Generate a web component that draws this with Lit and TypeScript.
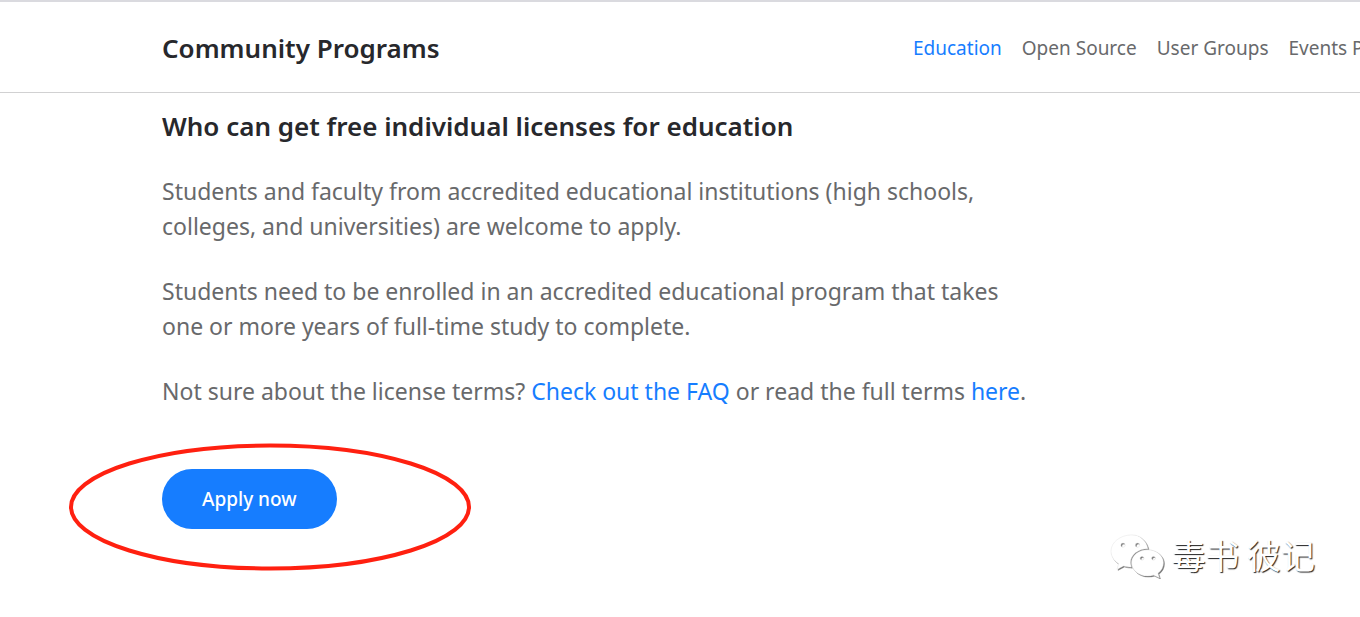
import { LitElement, html, css, svg } from "lit";
import { customElement } from "lit/decorators.js";
import { classMap } from "lit/directives/class-map.js";

const programs = ["Education", "Open Source", "User Groups", "Events Partnership"];

@customElement("app-root")
export class AppRoot extends LitElement {
  static styles = css`
    :host {
      display: block;
      position: relative;
      min-height: 100vh;
      overflow: hidden;
      background: #fff;
      color: #27282c;
      font-family: "Noto Sans", "Open Sans", "Noto Sans CJK SC", sans-serif;
    }
    a {
      color: #167dff;
      text-decoration: none;
    }
    .header {
      display: grid;
      grid-template-columns: minmax(300px, 751px) minmax(0, 1fr);
      align-items: center;
      padding: 28px 0 26px 162px;
      border-top: 2px solid #dadadf;
      border-bottom: 1px solid #d1d1d2;
    }
    .title,
    .heading {
      margin: 0;
      font-size: 26px;
      line-height: 36px;
      font-weight: 600;
    }
    .nav {
      display: flex;
      gap: 20px;
      min-width: 0;
      font-size: 19px;
      line-height: 28px;
      white-space: nowrap;
    }
    .nav a {
      color: #68696b;
    }
    .nav a.current {
      color: #167dff;
    }
    .content {
      padding: 15px 40px 0 162px;
    }
    .text {
      max-width: 880px;
      margin: 30px 0;
      font-size: 23px;
      line-height: 35px;
      color: #68696b;
    }
    .action {
      position: relative;
      display: inline-block;
      margin-top: 30px;
    }
    .apply {
      display: block;
      height: 60px;
      padding: 0 40px;
      border: 0;
      border-radius: 30px;
      background: #167dff;
      color: #fff;
      font: 500 19px/28px "Noto Sans", "Open Sans", sans-serif;
      cursor: pointer;
    }
    .ring {
      position: absolute;
      left: -93px;
      top: -26px;
      width: 402px;
      height: 128px;
      pointer-events: none;
    }
    .mark {
      position: absolute;
      right: 45px;
      bottom: 38px;
      display: flex;
      align-items: center;
      gap: 7px;
      color: #fff;
      font: 400 34px/48px "Noto Sans CJK SC", sans-serif;
      text-shadow: 1px 1px 1px #222;
    }
    .wechat {
      width: 54px;
      height: 46px;
      filter: drop-shadow(1px 1px 0 #777);
    }
  `;

  render() {
    return html`
      <header class="header">
        <h1 class="title">Community Programs</h1>
        <nav class="nav" aria-label="Programs">
          ${programs.map(
            (name, i) => html`<a href="#" class=${classMap({ current: i === 0 })}>${name}</a>`
          )}
        </nav>
      </header>
      <main class="content">
        <h2 class="heading">Who can get free individual licenses for education</h2>
        <p class="text">
          Students and faculty from accredited educational institutions (high schools, colleges,
          and universities) are welcome to apply.
        </p>
        <p class="text">
          Students need to be enrolled in an accredited educational program that takes one or more
          years of full-time study to complete.
        </p>
        <p class="text">
          Not sure about the license terms? <a href="#">Check out the FAQ</a> or read the full
          terms <a href="#">here</a>.
        </p>
        <div class="action">
          <button class="apply" type="button">Apply now</button>
          <svg class="ring" viewBox="0 0 402 128" aria-hidden="true">
            <ellipse cx="201" cy="64" rx="199" ry="61.5" fill="none" stroke="#ff2010" stroke-width="4" />
          </svg>
        </div>
      </main>
      <div class="mark">
        <svg class="wechat" viewBox="0 0 54 48" preserveAspectRatio="none" aria-hidden="true">
          ${svg`
            <path fill="#fff" stroke="#ddd" stroke-width=".4" fill-rule="evenodd" d="M22 3C10.500 3 1 10.500 1 20c0 5.500 3 10 7.500 13L7 39l6.500-3.500c2.500.800 5 1.200 8 1.200A17 17 0 0 1 20.500 32C20.500 24 28 17.500 38 17.500C36.500 9 30 3 22 3ZM13 11.500a2.200 2.200 0 1 1 0 4.400a2.200 2.200 0 0 1 0-4.400ZM27.500 11.500a2.200 2.200 0 1 1 0 4.400a2.200 2.200 0 0 1 0-4.400Z"/>
            <path fill="#fff" stroke="#ccc" stroke-width=".4" fill-rule="evenodd" d="M37.500 18.500C28.500 18.500 21.500 24.500 21.500 32S28.500 46 37.500 46c2.200 0 4.200-.400 6-1l6 3-1.500-5c3.500-2.700 5.500-6.500 5.500-11C53.500 24.500 46.500 18.500 37.500 18.500ZM32 25.500a1.900 1.900 0 1 1 0 3.800a1.900 1.900 0 0 1 0-3.800ZM43.500 25.500a1.900 1.900 0 1 1 0 3.800a1.900 1.900 0 0 1 0-3.800Z"/>
          `}
        </svg>
        <span>毒书 彼记</span>
      </div>
    `;
  }
}
